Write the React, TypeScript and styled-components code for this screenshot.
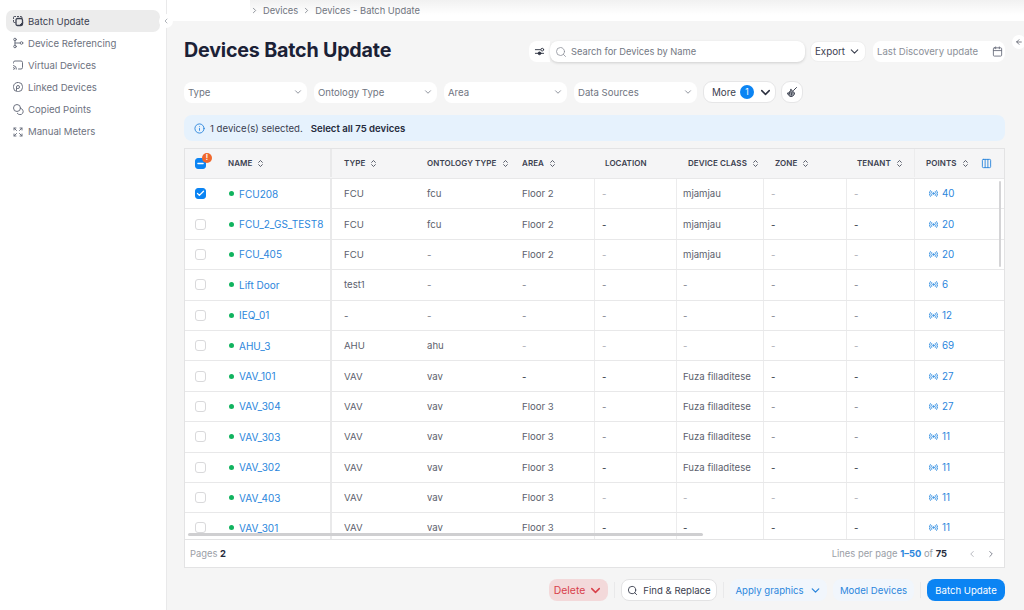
import React, { ReactElement, ReactNode } from 'react';
import styled, { createGlobalStyle } from 'styled-components';
import {
  ArrowLeft,
  Calendar,
  Check,
  ChevronDown,
  ChevronLeft,
  ChevronRight,
  ChevronsUpDown,
  Columns3,
  Info,
  Minus,
  Search,
} from 'lucide-react';

const GRID = '145px 85px 95px 84px 82px 87px 83px 68px 90px';

const GlobalStyle = createGlobalStyle`
  html, body {
    margin: 0;
    height: 100%;
    background: #f5f5f5;
    font-family: Inter, "Noto Sans", sans-serif;
  }
  * { box-sizing: border-box; }
`;

const Page = styled.div`
  display: flex;
  height: 610px;
  width: 1024px;
  overflow: hidden;
  position: relative;
`;

/* sidebar */
const Sidebar = styled.aside`
  background: #fff;
  border-right: 1px solid #e9e9ea;
  display: flex;
  flex: 0 0 167px;
  flex-direction: column;
  padding: 10px 6px 0 6px;
  position: relative;
`;
const NavItem = styled.div<{ $active?: boolean }>`
  align-items: center;
  background: ${(p) => (p.$active ? '#ececec' : 'transparent')};
  border-radius: 7px;
  color: ${(p) => (p.$active ? '#3c4150' : '#6d7280')};
  display: flex;
  font-size: 9.6px;
  gap: 4px;
  height: 22.1px;
  padding-left: 6px;
  svg { flex: none; }
`;
const CollapseButton = styled.div`
  align-items: center;
  background: #fff;
  border-radius: 50%;
  color: #8a8f99;
  display: flex;
  height: 14px;
  justify-content: center;
  position: absolute;
  right: -7px;
  top: 14px;
  width: 14px;
`;

/* main area */
const Main = styled.main`
  display: flex;
  flex: 1;
  flex-direction: column;
  min-width: 0;
`;
const TopBar = styled.div`
  background: #fff;
  display: flex;
  flex: 0 0 21px;
  padding-left: 83px;
`;
const Crumbs = styled.div`
  align-items: center;
  background: linear-gradient(#f1f1f1, #fff 70%);
  color: #70757f;
  display: flex;
  flex: 1;
  font-size: 9.35px;
  gap: 4px;
`;
const Content = styled.div`
  display: flex;
  flex: 1;
  flex-direction: column;
  padding: 0 19px 0 17px;
`;
const TitleRow = styled.div`
  align-items: center;
  display: flex;
  height: 21px;
  margin-top: 20px;
`;
const Title = styled.h1`
  color: #1b2136;
  flex: 1;
  font-size: 19.7px;
  font-weight: 700;
  letter-spacing: -0.01em;
  margin: 0 0 3px;
  white-space: nowrap;
`;
const FilterToggle = styled.div`
  align-items: center;
  background: #fff;
  border-radius: 8px 0 0 8px;
  display: flex;
  height: 21px;
  justify-content: center;
  width: 21px;
`;
const SearchBox = styled.div`
  align-items: center;
  background: #fff;
  border-radius: 8px;
  box-shadow: 0 1px 3px rgba(0, 0, 0, 0.16);
  color: #737883;
  display: flex;
  font-size: 9.3px;
  gap: 4px;
  height: 21px;
  margin-right: 5px;
  padding-left: 5px;
  width: 255px;
`;
const ExportButton = styled.div`
  align-items: center;
  background: #fff;
  border: 1px solid #efefef;
  border-radius: 8px;
  color: #3c4150;
  display: flex;
  font-size: 9.8px;
  gap: 3px;
  height: 21px;
  justify-content: center;
  margin-right: 7px;
  width: 56px;
`;
const DateBox = styled.div`
  align-items: center;
  background: #fff;
  border-radius: 8px;
  color: #8b8f98;
  display: flex;
  font-size: 9.6px;
  height: 21px;
  justify-content: space-between;
  padding: 0 2px 0 4px;
  width: 132px;
`;
const BackButton = styled.div`
  align-items: center;
  background: #fff;
  border-radius: 50%;
  color: #3c4150;
  display: flex;
  height: 14px;
  justify-content: center;
  position: absolute;
  right: -2px;
  top: 35px;
  width: 14px;
`;
const FilterRow = styled.div`
  align-items: center;
  display: flex;
  gap: 7px;
  margin-top: 19px;
`;
const Select = styled.div`
  align-items: center;
  background: #fff;
  border-radius: 8px;
  color: #70757f;
  display: flex;
  font-size: 9.6px;
  height: 21px;
  justify-content: space-between;
  padding: 0 4px;
  width: 123px;
`;
const MoreButton = styled.div`
  align-items: center;
  background: #fff;
  border: 1px solid #e6e6e7;
  border-radius: 9px;
  color: #3c4150;
  display: flex;
  font-size: 9.8px;
  gap: 4px;
  height: 22px;
  margin-left: -1px;
  padding-left: 8px;
  width: 73px;
`;
const Count = styled.span`
  align-items: center;
  background: #0b84f3;
  border-radius: 50%;
  color: #fff;
  display: flex;
  font-size: 8.5px;
  height: 14px;
  justify-content: center;
  width: 14px;
`;
const IconButton = styled.div`
  align-items: center;
  background: #fff;
  border: 1px solid #e6e6e7;
  border-radius: 9px;
  display: flex;
  height: 22px;
  justify-content: center;
  margin-left: -2px;
  width: 22px;
`;
const Notice = styled.div`
  align-items: center;
  background: #e6f2fd;
  border-radius: 8px;
  color: #3a4050;
  display: flex;
  font-size: 9.6px;
  gap: 5px;
  height: 26px;
  margin-top: 12px;
  padding-left: 10px;
  strong { font-weight: 600; margin-left: 3px; color: #252b3c; }
`;

/* table */
const Table = styled.section`
  background: #fff;
  border: 1px solid #e3e3e4;
  display: flex;
  flex-direction: column;
  height: 420px;
  margin-top: 7px;
  position: relative;
`;
const TableBody = styled.div`
  flex: 1;
  min-height: 0;
  overflow: hidden;
`;
const HeadRow = styled.div`
  background: #f5f5f6;
  display: grid;
  grid-template-columns: ${GRID};
  height: 29px;
  padding-bottom: 1px;
`;
const Row = styled.div`
  border-top: 1px solid #e8e8e9;
  display: grid;
  grid-template-columns: ${GRID};
  height: 30.4px;
`;
const Cell = styled.div<{ $rule?: 'thin' | 'thick'; $inset?: number; $tone?: 'dark' | 'mid' | 'light' }>`
  align-items: center;
  border-left: ${(p) =>
    p.$rule === 'thick' ? '2px solid #e9e9ea' : p.$rule === 'thin' ? '1px solid #ececed' : 'none'};
  color: ${(p) =>
    p.$tone === 'light' ? '#a9acb3' : p.$tone === 'mid' ? '#7c808a' : p.$tone === 'dark' ? '#2c3140' : '#5c616d'};
  display: flex;
  font-size: 9.6px;
  min-width: 0;
  padding-left: ${(p) => p.$inset ?? 12}px;
  white-space: nowrap;
`;
const HeadCell = styled(Cell)`
  color: #3c4150;
  font-size: 8px;
  font-weight: 600;
  gap: 4px;
  letter-spacing: 0.01em;
`;
const Box = styled.span<{ $on?: boolean }>`
  align-items: center;
  background: ${(p) => (p.$on ? '#0b84f3' : '#fff')};
  border: 1px solid ${(p) => (p.$on ? '#0b84f3' : '#d9d9db')};
  border-radius: 3px;
  color: #fff;
  display: flex;
  flex: none;
  height: 11px;
  justify-content: center;
  margin-right: 11px;
  position: relative;
  width: 11px;
`;
const Alert = styled.span`
  align-items: center;
  background: #f0682d;
  border-radius: 50%;
  color: #fff;
  display: flex;
  font-size: 7px;
  font-weight: 700;
  height: 10px;
  justify-content: center;
  position: absolute;
  right: -7px;
  top: -6px;
  width: 10px;
`;
const NameLabel = styled.span`
  margin-left: 7px;
`;
const Dot = styled.span`
  background: #11b35f;
  border-radius: 50%;
  flex: none;
  height: 5px;
  margin: 0 5px 0 12px;
  width: 5px;
`;
const DeviceLink = styled.span`
  color: #2b86dc;
  font-size: 10px;
`;
const PointsLink = styled.span`
  align-items: center;
  color: #2b86dc;
  display: flex;
  font-size: 9.8px;
  gap: 4px;
`;
const ColumnsToggle = styled.span`
  display: flex;
  margin-left: 7px;
`;
const VerticalThumb = styled.div`
  background: #d4d4d6;
  border-radius: 2px;
  height: 86px;
  position: absolute;
  right: 3px;
  top: 32px;
  width: 2px;
`;
const HorizontalThumb = styled.div`
  background: #cfcfd1;
  border-radius: 2px;
  bottom: 31px;
  height: 3px;
  left: 3px;
  position: absolute;
  width: 515px;
`;
const TableFooter = styled.div`
  align-items: center;
  border-top: 1px solid #e3e3e4;
  color: #9a9ea6;
  display: flex;
  flex: 0 0 28px;
  font-size: 9.4px;
  justify-content: space-between;
  padding: 0 8px 0 5px;
  b { color: #252b3c; font-weight: 700; }
  em { color: #2b86dc; font-style: normal; font-weight: 700; }
`;
const Pager = styled.div`
  align-items: center;
  display: flex;
  gap: 9px;
  span { margin-right: 11px; }
`;

/* bottom actions */
const Actions = styled.div`
  align-items: center;
  display: flex;
  gap: 6px;
  justify-content: flex-end;
  margin-top: 11px;
`;
const Action = styled.div<{ $kind: 'danger' | 'outline' | 'soft' | 'primary'; $width: number }>`
  align-items: center;
  background: ${(p) =>
    ({ danger: '#f3d9da', outline: '#fff', soft: '#f1f6fc', primary: '#0b84f3' })[p.$kind]};
  border: ${(p) => (p.$kind === 'outline' ? '1px solid #e3e3e4' : 'none')};
  border-radius: 8px;
  color: ${(p) =>
    ({ danger: '#d8404a', outline: '#3c4150', soft: '#2b86dc', primary: '#fff' })[p.$kind]};
  display: flex;
  font-size: ${(p) => (p.$kind === 'danger' ? 10.4 : 9.6)}px;
  gap: ${(p) => (p.$kind === 'danger' ? 3 : 5)}px;
  height: 22px;
  justify-content: center;
  width: ${(p) => p.$width}px;
`;
const Divider = styled.span`
  background: #e9e9ea;
  height: 16px;
  width: 1px;
`;

/* drawn icons */
const Glyph = ({ size = 12, color = '#6d7280', children }: { size?: number; color?: string; children: ReactNode }) => (
  <svg width={size} height={size} viewBox="0 0 24 24" fill="none" stroke={color} strokeWidth={2} strokeLinecap="round" strokeLinejoin="round">
    {children}
  </svg>
);

const BatchIcon = () => (
  <Glyph color="#3c4150">
    <path d="M7 3H5a2 2 0 0 0-2 2v2M3 11v2a2 2 0 0 0 2 2h1M11 3h2M17 3h1a2 2 0 0 1 2 2" />
    <rect x="8" y="7" width="13" height="14" rx="3" strokeWidth={2.6} />
    <path d="M21 15l-6 6h3a3 3 0 0 0 3-3z" fill="#3c4150" />
  </Glyph>
);
const ReferenceIcon = () => (
  <Glyph>
    <circle cx="6" cy="5" r="2.6" />
    <circle cx="6" cy="19" r="2.6" />
    <circle cx="19" cy="12" r="2.6" />
    <path d="M6 8v8M6 12h10" />
  </Glyph>
);
const VirtualIcon = () => (
  <Glyph>
    <path d="M3 8V7a3 3 0 0 1 3-3h12a3 3 0 0 1 3 3v10a3 3 0 0 1-3 3h-5" />
    <path d="M3 13a7 7 0 0 1 6 7M3 17a3 3 0 0 1 2.6 3" />
    <path d="M3 20.5h.01" />
  </Glyph>
);
const LinkedIcon = () => (
  <Glyph>
    <rect x="3" y="3" width="18" height="18" rx="8" />
    <path d="M9 19v-7a3 3 0 1 1 3 3h-1" />
  </Glyph>
);
const CopiedIcon = () => (
  <Glyph>
    <circle cx="10" cy="10" r="7" />
    <path d="M17 10.5a6.5 6.5 0 1 1-6.5 10" />
  </Glyph>
);
const MeterIcon = () => (
  <Glyph>
    <path d="M4 4l5 5M20 4l-5 5M4 20l5-5M20 20l-5-5" />
    <path d="M4 8V4h4M16 4h4v4M4 16v4h4M20 16v4h-4" />
  </Glyph>
);
const SlidersIcon = () => (
  <Glyph size={11} color="#2c3140">
    <path d="M3 8h11M3 16h5" />
    <circle cx="18" cy="8" r="3" />
    <circle cx="12" cy="16" r="3" fill="#2c3140" />
    <path d="M16 16h5" />
  </Glyph>
);
const ClearIcon = () => (
  <Glyph size={12} color="#3c4150">
    <path d="M21 3l-6 6" />
    <path d="M10 7l7 7c0 4-3 7-7 7-3 0-6-3-7-7 3 0 6-3 7-7z" fill="#9a9ea6" />
    <path d="M8 12l-2 5M12 12l-1 6" />
  </Glyph>
);
const SignalIcon = () => (
  <Glyph size={9} color="#4a9be4">
    <circle cx="12" cy="12" r="2.4" fill="#4a9be4" />
    <path d="M7 6.5a8 8 0 0 0 0 11M17 6.5a8 8 0 0 1 0 11M3.5 4a12 12 0 0 0 0 16M20.5 4a12 12 0 0 1 0 16" strokeWidth={2.6} />
  </Glyph>
);

type Tone = 'dark' | 'mid' | 'light';

type Device = {
  name: string;
  type: string;
  ontology: string;
  area: string;
  deviceClass: string;
  points: number;
  checked?: boolean;
  dash: Tone;
};

const devices: Device[] = [
  { name: 'FCU208', type: 'FCU', ontology: 'fcu', area: 'Floor 2', deviceClass: 'mjamjau', points: 40, checked: true, dash: 'light' },
  { name: 'FCU_2_GS_TEST8', type: 'FCU', ontology: 'fcu', area: 'Floor 2', deviceClass: 'mjamjau', points: 20, dash: 'dark' },
  { name: 'FCU_405', type: 'FCU', ontology: '-', area: 'Floor 2', deviceClass: 'mjamjau', points: 20, dash: 'light' },
  { name: 'Lift Door', type: 'test1', ontology: '-', area: '-', deviceClass: '-', points: 6, dash: 'mid' },
  { name: 'IEQ_01', type: '-', ontology: '-', area: '-', deviceClass: '-', points: 12, dash: 'mid' },
  { name: 'AHU_3', type: 'AHU', ontology: 'ahu', area: '-', deviceClass: '-', points: 69, dash: 'light' },
  { name: 'VAV_101', type: 'VAV', ontology: 'vav', area: '-', deviceClass: 'Fuza filladitese', points: 27, dash: 'dark' },
  { name: 'VAV_304', type: 'VAV', ontology: 'vav', area: 'Floor 3', deviceClass: 'Fuza filladitese', points: 27, dash: 'mid' },
  { name: 'VAV_303', type: 'VAV', ontology: 'vav', area: 'Floor 3', deviceClass: 'Fuza filladitese', points: 11, dash: 'mid' },
  { name: 'VAV_302', type: 'VAV', ontology: 'vav', area: 'Floor 3', deviceClass: 'Fuza filladitese', points: 11, dash: 'dark' },
  { name: 'VAV_403', type: 'VAV', ontology: 'vav', area: 'Floor 3', deviceClass: '-', points: 11, dash: 'light' },
  { name: 'VAV_301', type: 'VAV', ontology: 'vav', area: 'Floor 3', deviceClass: '-', points: 11, dash: 'dark' },
];

const navItems = [
  { label: 'Batch Update', icon: <BatchIcon />, active: true },
  { label: 'Device Referencing', icon: <ReferenceIcon /> },
  { label: 'Virtual Devices', icon: <VirtualIcon /> },
  { label: 'Linked Devices', icon: <LinkedIcon /> },
  { label: 'Copied Points', icon: <CopiedIcon /> },
  { label: 'Manual Meters', icon: <MeterIcon /> },
];

const Sort = () => <ChevronsUpDown size={9} color="#3c4150" strokeWidth={2.2} />;

function Value({ text, tone, rule, inset }: { text: string; tone: Tone; rule?: 'thin'; inset?: number }): ReactElement {
  return (
    <Cell $rule={rule} $inset={inset} $tone={text === '-' ? tone : undefined}>
      {text}
    </Cell>
  );
}

export default function App(): ReactElement {
  return (
    <Page>
      <GlobalStyle />
      <Sidebar>
        {navItems.map((item) => (
          <NavItem key={item.label} $active={item.active}>
            {item.icon}
            {item.label}
          </NavItem>
        ))}
        <CollapseButton>
          <ChevronLeft size={8} />
        </CollapseButton>
      </Sidebar>
      <Main>
        <TopBar>
          <Crumbs>
            <ChevronRight size={9} />
            Devices
            <ChevronRight size={9} />
            Devices - Batch Update
          </Crumbs>
        </TopBar>
        <Content>
          <TitleRow>
            <Title>Devices Batch Update</Title>
            <FilterToggle>
              <SlidersIcon />
            </FilterToggle>
            <SearchBox>
              <Search size={12} color="#8b8f98" strokeWidth={1.6} />
              Search for Devices by Name
            </SearchBox>
            <ExportButton>
              Export
              <ChevronDown size={13} />
            </ExportButton>
            <DateBox>
              Last Discovery update
              <Calendar size={11} color="#6d7280" />
            </DateBox>
          </TitleRow>
          <FilterRow>
            {['Type', 'Ontology Type', 'Area', 'Data Sources'].map((label) => (
              <Select key={label}>
                {label}
                <ChevronDown size={10} color="#7c818b" />
              </Select>
            ))}
            <MoreButton>
              More
              <Count>1</Count>
              <ChevronDown size={15} color="#2c3140" strokeWidth={2.4} />
            </MoreButton>
            <IconButton>
              <ClearIcon />
            </IconButton>
          </FilterRow>
          <Notice>
            <Info size={11} color="#2b86dc" />
            1 device(s) selected.
            <strong>Select all 75 devices</strong>
          </Notice>
          <Table>
            <HeadRow>
              <HeadCell $inset={10}>
                <Box $on>
                  <Minus size={9} strokeWidth={3.5} />
                  <Alert>!</Alert>
                </Box>
                <NameLabel>NAME</NameLabel>
                <Sort />
              </HeadCell>
              <HeadCell $rule="thick">TYPE <Sort /></HeadCell>
              <HeadCell>ONTOLOGY TYPE <Sort /></HeadCell>
              <HeadCell>AREA <Sort /></HeadCell>
              <HeadCell $inset={11}>LOCATION</HeadCell>
              <HeadCell $inset={12}>DEVICE CLASS <Sort /></HeadCell>
              <HeadCell $inset={12}>ZONE <Sort /></HeadCell>
              <HeadCell $inset={11}>TENANT <Sort /></HeadCell>
              <HeadCell $rule="thin" $inset={11}>
                POINTS <Sort />
                <ColumnsToggle>
                  <Columns3 size={11} color="#2b86dc" />
                </ColumnsToggle>
              </HeadCell>
            </HeadRow>
            <TableBody>
              {devices.map((d) => (
                <Row key={d.name}>
                  <Cell $inset={10}>
                    <Box $on={d.checked}>{d.checked && <Check size={9} strokeWidth={3.5} />}</Box>
                    <Dot />
                    <DeviceLink>{d.name}</DeviceLink>
                  </Cell>
                  <Cell $rule="thick">{d.type}</Cell>
                  <Value text={d.ontology} tone={d.dash === 'dark' ? 'dark' : 'mid'} />
                  <Value text={d.area} tone={d.dash} />
                  <Value text="-" tone={d.dash} rule="thin" inset={7} />
                  <Value text={d.deviceClass} tone={d.dash} rule="thin" inset={6} />
                  <Value text="-" tone={d.dash} rule="thin" inset={7} />
                  <Value text="-" tone={d.dash} rule="thin" inset={7} />
                  <Cell $rule="thin" $inset={14}>
                    <PointsLink>
                      <SignalIcon />
                      {d.points}
                    </PointsLink>
                  </Cell>
                </Row>
              ))}
            </TableBody>
            <TableFooter>
              <span>
                Pages <b>2</b>
              </span>
              <Pager>
                <span>
                  Lines per page <em>1–50</em> of <b>75</b>
                </span>
                <ChevronLeft size={10} color="#a9acb3" />
                <ChevronRight size={10} color="#6d7280" />
              </Pager>
            </TableFooter>
            <VerticalThumb />
            <HorizontalThumb />
          </Table>
          <Actions>
            <Action $kind="danger" $width={59}>
              Delete
              <ChevronDown size={15} strokeWidth={2.4} />
            </Action>
            <Divider />
            <Action $kind="outline" $width={96}>
              <Search size={11} />
              Find &amp; Replace
            </Action>
            <Divider />
            <Action $kind="soft" $width={97}>
              Apply graphics
              <ChevronDown size={13} strokeWidth={2.4} />
            </Action>
            <Action $kind="soft" $width={81}>Model Devices</Action>
            <Divider />
            <Action $kind="primary" $width={78}>Batch Update</Action>
          </Actions>
        </Content>
      </Main>
      <BackButton>
        <ArrowLeft size={8} />
      </BackButton>
    </Page>
  );
}
